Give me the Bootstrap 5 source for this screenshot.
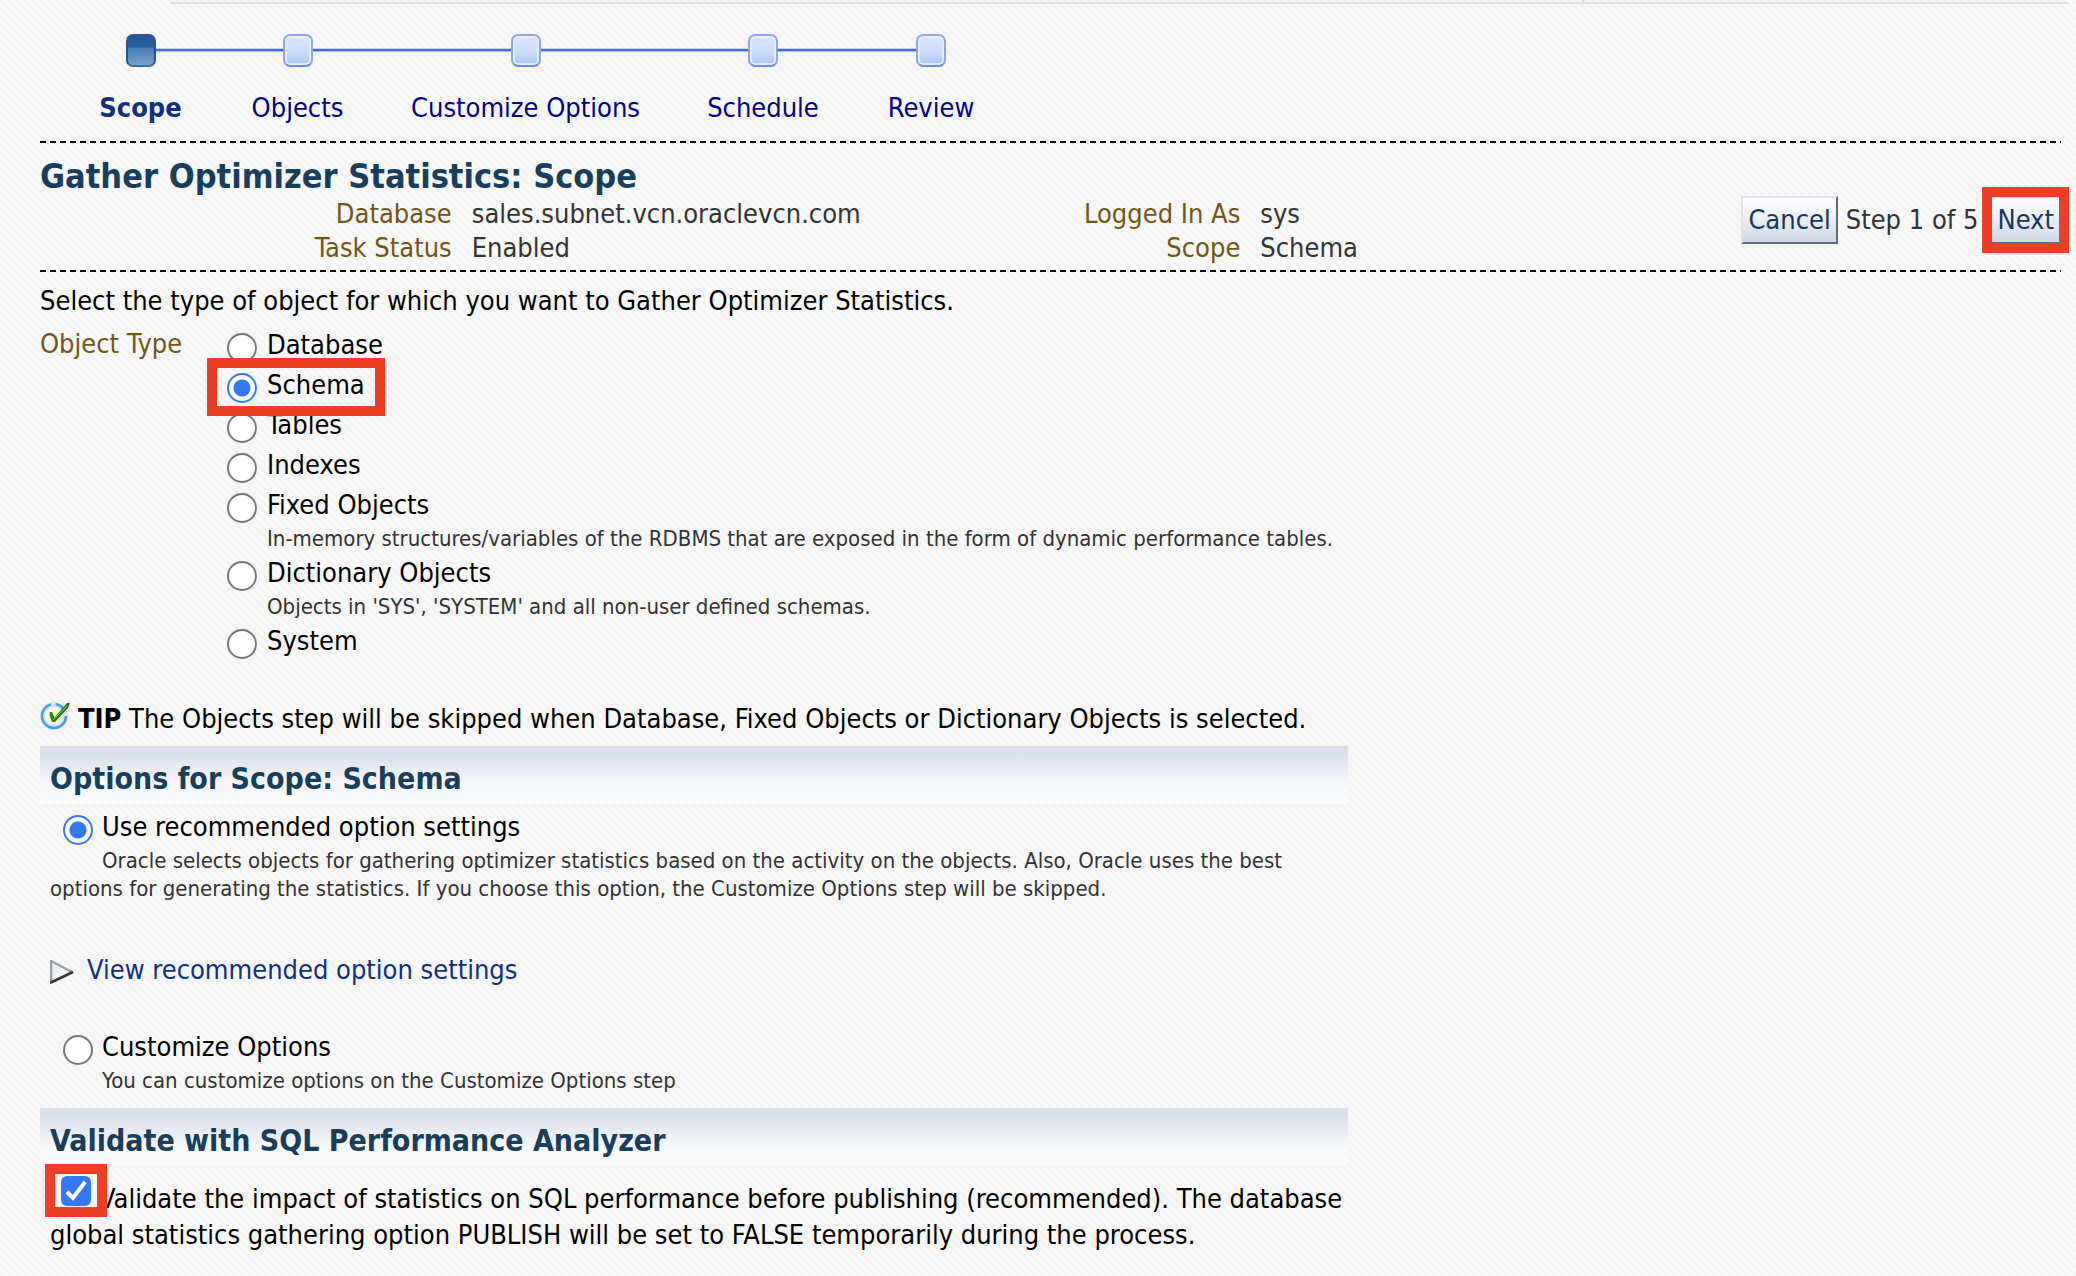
<!DOCTYPE html>
<html lang="en">
<head>
<meta charset="utf-8">
<meta name="viewport" content="width=device-width, initial-scale=1">
<title>Gather Optimizer Statistics: Scope</title>
<link rel="stylesheet" href="https://cdn.jsdelivr.net/npm/bootstrap@5.3.0/dist/css/bootstrap.min.css">
<style>
  :root { --navy: #193e5b; --olive: #705719; --alert: #eb4025; --blue: #3478f6; }
  body {
    font-family: "DejaVu Sans Condensed", "DejaVu Sans", "Noto Sans", sans-serif;
    font-size: 27px; line-height: 36px; color: #000;
    background: #f7f7f7 linear-gradient(45deg, #f2f2f2 0%, #f9f9f9 25%, #f9f9f9 35%, #f2f2f2 50%, #f9f9f9 75%, #f9f9f9 85%, #f2f2f2 100%) 0 0 / 8px 8px;
  }
  .wizard-page { padding: 2px 15px 0 40px; }
  .top-rule { height: 2px; margin: 0 -7px 30px 130px; background: #d9e0e7; }
  .tick { position: absolute; left: 76.2%; top: 0; width: 2px; height: 2px; background: #d9e0e7; }

  .steps { display: grid; grid-template-columns: 153px 161px 295px 180px 156px; margin: 0 0 16px 24px; padding: 0; list-style: none; }
  .step-track { display: flex; align-items: center; height: 33px; margin-bottom: 24px; }
  .step-track::before, .step-track::after { content: ""; flex: 1; height: 5px; background: linear-gradient(#c9d3f0 1px, #4a67d6 1px 3px, #b4c2ea 3px 4px, #e3e8f5 4px); }
  .steps li:first-child .step-track::before, .steps li:last-child .step-track::after { visibility: hidden; }
  .step-box { width: 30px; height: 33px; border: 2px solid #8ea6f0; border-bottom-color: #7288ea; border-radius: 7px; background: linear-gradient(#dce8fe, #c9dafb 60%, #a9c5f7); box-shadow: inset 0 0 0 2px #e4ecfe; }
  .step-box.current { border-color: #2a5690; border-bottom-color: #3b6ca0; background: linear-gradient(#27548f, #2a5c9f 38%, #4479b2 42%, #78a5cd); box-shadow: none; }
  .step-name { display: block; line-height: 34px; text-align: center; color: #00008b; text-decoration: none; }
  strong.step-name { color: #10307f; }

  .dashes { height: 2px; background: repeating-linear-gradient(90deg, #000 0 6px, transparent 6px 10px); }
  h1 { font-size: 34px; line-height: 40px; font-weight: 700; color: var(--navy); margin: 13px 0 0; }
  .facts-row { margin-bottom: 5px; }
  .facts { display: grid; grid-template-columns: 24.2% 34.5% 9.5% auto; column-gap: 20px; line-height: 34px; margin: 0; padding-top: 1px; flex: 1; min-width: 0; }
  .facts dt { font-weight: 400; text-align: right; color: var(--olive); white-space: nowrap; }
  .facts dd { margin: 0; color: #333; }
  .olive { color: var(--olive); }
  .btn-bevel {
    font: inherit; line-height: 44px; padding: 0 5px; color: #14385a;
    border: 2px solid; border-color: #e1e3ea #666b7b #666b7b #e1e3ea; border-radius: 0;
    background: linear-gradient(#fff, #f6f7fb 25%, #cfd6e5);
  }
  .btn-bevel:hover { color: #14385a; background: #e2e7f1; border-color: #e1e3ea #666b7b #666b7b #e1e3ea; }
  .step-count { color: #333; }

  .choice { display: flex; position: relative; line-height: 40px; }
  .choice .form-check-input { width: 30px; height: 30px; margin: 8px 10px 0 0; border: 2px solid #767676; background-color: #fff; flex: none; }
  .choice .form-check-input:checked { border-color: var(--blue); background-image: radial-gradient(circle, var(--blue) 8px, #fff 9px); }
  .help-line { font-size: 22px; line-height: 28px; color: #333; margin: 0; }
  .intro { margin: 11px 0 6px; }
  .object-label { width: 187px; line-height: 38px; }
  .indent-40 { padding-left: 40px; }
  .tip-line { line-height: 40px; gap: 6px; margin: 38px 0 7px; }

  .half-page { width: 64.7%; }
  h2 { font-size: 30px; line-height: 50px; font-weight: 700; color: var(--navy); margin: 0 0 3px; padding: 8px 10px 0; background: linear-gradient(#d8dde8, #e3e7ee 30%, #f6f7fa 65%, #fbfcfe); }
  .panel-body { padding: 0 0 0 10px; }
  .panel-body .choice { padding-left: 13px; }
  .panel-body .choice .form-check-input { margin-right: 9px; }
  .hang { text-indent: 52px; }
  .disclose { color: #10307f; text-decoration: none; line-height: 40px; display: inline-flex; align-items: center; gap: 13px; margin: 47px 0 37px; }
  .disclose svg { margin-top: 3px; }
  .sql-panel { margin-top: 13px; }
  .validate-text { position: relative; padding-top: 12px; }
  .validate-text .form-check-input { position: relative; z-index: 1; float: left; width: 30px; height: 30px; margin: -5px 8px 0 11px; border-radius: 6px; border: 0; background-color: var(--blue); background-image: url("data:image/svg+xml,%3Csvg xmlns='http://www.w3.org/2000/svg' viewBox='0 0 30 30'%3E%3Cpath d='M6 16l6 6L24 6' fill='none' stroke='%23fff' stroke-width='4'/%3E%3C/svg%3E"); }

  /* red call-outs laid over the controls */
  .callout { position: absolute; border: 10px solid var(--alert); pointer-events: none; }
  .callout-next { inset: -9px -8px; }
  .callout-choice { left: -20px; top: -7px; width: 178px; height: 58px; z-index: 1; }
  .callout-check { left: -5px; top: -5px; width: 62px; height: 53px; background: #fafafa; }
</style>
</head>
<body>
<main class="wizard-page">
  <div class="top-rule"></div><span class="tick"></span>

  <ol class="steps">
    <li><div class="step-track"><span class="step-box current"></span></div><strong class="step-name">Scope</strong></li>
    <li><div class="step-track"><span class="step-box"></span></div><a class="step-name" href="#">Objects</a></li>
    <li><div class="step-track"><span class="step-box"></span></div><a class="step-name" href="#">Customize Options</a></li>
    <li><div class="step-track"><span class="step-box"></span></div><a class="step-name" href="#">Schedule</a></li>
    <li><div class="step-track"><span class="step-box"></span></div><a class="step-name" href="#">Review</a></li>
  </ol>

  <div class="dashes"></div>
  <h1>Gather Optimizer Statistics: Scope</h1>
  <div class="facts-row d-flex align-items-start">
    <dl class="facts">
      <dt>Database</dt><dd>sales.subnet.vcn.oraclevcn.com</dd>
      <dt>Logged In As</dt><dd>sys</dd>
      <dt>Task Status</dt><dd>Enabled</dd>
      <dt>Scope</dt><dd>Schema</dd>
    </dl>
    <div class="d-flex align-items-center gap-2">
      <button type="button" class="btn btn-bevel">Cancel</button>
      <span class="step-count">Step 1 of 5</span>
      <span class="position-relative ms-1"><button type="button" class="btn btn-bevel">Next</button><span class="callout callout-next"></span></span>
    </div>
  </div>
  <div class="dashes"></div>

  <form>
    <p class="intro">Select the type of object for which you want to Gather Optimizer Statistics.</p>
    <div class="d-flex" role="radiogroup" aria-labelledby="otype">
      <div class="object-label olive" id="otype">Object Type</div>
      <div>
        <div class="choice"><input class="form-check-input" type="radio" name="otype" id="o1"><label for="o1">Database</label></div>
        <div class="choice"><input class="form-check-input" type="radio" name="otype" id="o2" checked><label for="o2">Schema</label><span class="callout callout-choice"></span></div>
        <div class="choice"><input class="form-check-input" type="radio" name="otype" id="o3"><label for="o3">Tables</label></div>
        <div class="choice"><input class="form-check-input" type="radio" name="otype" id="o4"><label for="o4">Indexes</label></div>
        <div class="choice"><input class="form-check-input" type="radio" name="otype" id="o5"><label for="o5">Fixed Objects</label></div>
        <p class="help-line indent-40">In-memory structures/variables of the RDBMS that are exposed in the form of dynamic performance tables.</p>
        <div class="choice"><input class="form-check-input" type="radio" name="otype" id="o6"><label for="o6">Dictionary Objects</label></div>
        <p class="help-line indent-40">Objects in 'SYS', 'SYSTEM' and all non-user defined schemas.</p>
        <div class="choice"><input class="form-check-input" type="radio" name="otype" id="o7"><label for="o7">System</label></div>
      </div>
    </div>

    <p class="tip-line d-flex align-items-start">
      <svg width="32" height="32" viewBox="0 0 32 32" aria-hidden="true">
        <circle cx="14" cy="17" r="11.500" fill="#fdfbdc" stroke="#cfe2f8" stroke-width="5"/>
        <circle cx="14" cy="17" r="12" fill="none" stroke="#4f97e4" stroke-width="2.500" stroke-dasharray="53 5 9 8"/>
        <path d="M10 13l2 0 2.500 5.500L27 4l3 0-2 5-13 14-3 0-2.500-7z" fill="#2c7d14"/>
        <path d="M13 21L27 7" stroke="#8cc05a" stroke-width="1"/>
      </svg>
      <span><strong>TIP</strong> The Objects step will be skipped when Database, Fixed Objects or Dictionary Objects is selected.</span>
    </p>

    <section class="half-page">
      <h2>Options for Scope: Schema</h2>
      <div class="panel-body">
        <div class="choice"><input class="form-check-input" type="radio" name="opts" id="p1" checked><label for="p1">Use recommended option settings</label></div>
        <p class="help-line hang">Oracle selects objects for gathering optimizer statistics based on the activity on the objects. Also, Oracle uses the best options for generating the statistics. If you choose this option, the Customize Options step will be skipped.</p>
        <a class="disclose" href="#">
          <svg width="24" height="24" viewBox="0 0 24 24" aria-hidden="true">
            <path d="M1 1L22 12 1 23z" fill="#eef0f3"/>
            <path d="M1 23V1L22 12" fill="none" stroke="#9aa0a9" stroke-width="2.500"/>
            <path d="M0 23L23 12" fill="none" stroke="#333" stroke-width="2.500"/>
          </svg>View recommended option settings</a>
        <div class="choice"><input class="form-check-input" type="radio" name="opts" id="p2"><label for="p2">Customize Options</label></div>
        <p class="help-line hang">You can customize options on the Customize Options step</p>
      </div>
    </section>

    <section class="half-page sql-panel">
      <h2>Validate with SQL Performance Analyzer</h2>
      <div class="panel-body">
        <div class="validate-text"><span class="callout callout-check"></span><input class="form-check-input" type="checkbox" id="val" checked><label class="d-inline" for="val">Validate the impact of statistics on SQL performance before publishing (recommended). The database global statistics gathering option PUBLISH will be set to FALSE temporarily during the process.</label></div>
      </div>
    </section>
  </form>
</main>
<script src="https://cdn.jsdelivr.net/npm/bootstrap@5.3.0/dist/js/bootstrap.bundle.min.js"></script>
</body>
</html>
